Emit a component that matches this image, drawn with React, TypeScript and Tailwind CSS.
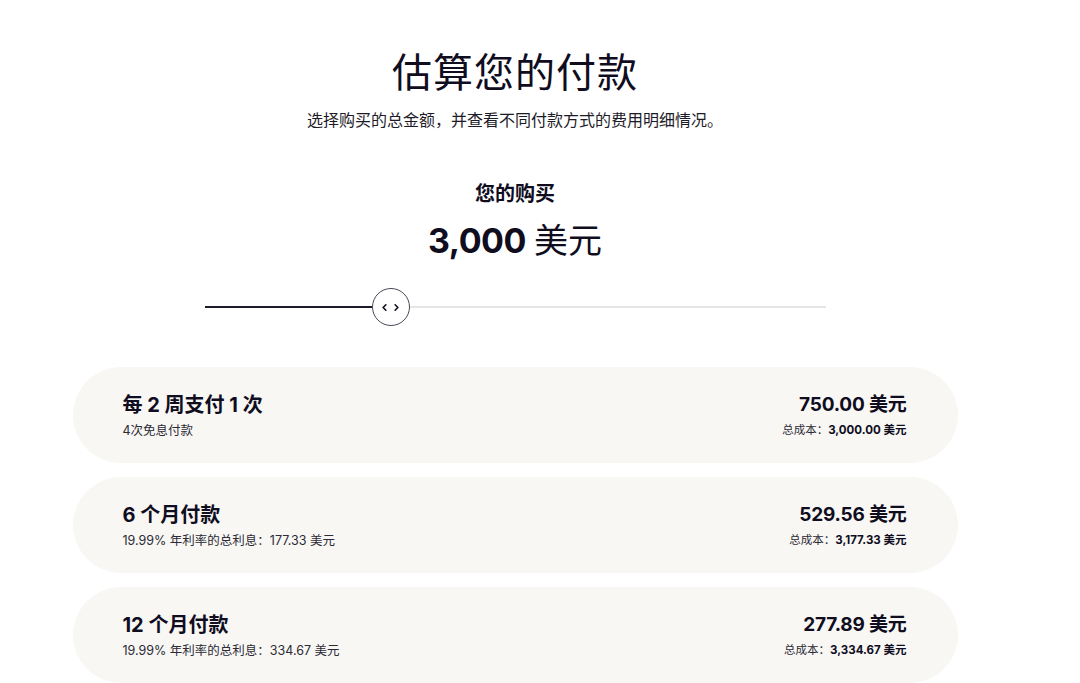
import { ChevronLeft, ChevronRight } from 'lucide-react';

interface PlanRow {
  title: string;
  detail: string;
  amount: string;
  total: string;
}

const plans: PlanRow[] = [
  { title: '每 2 周支付 1 次', detail: '4次免息付款', amount: '750.00 美元', total: '3,000.00 美元' },
  { title: '6 个月付款', detail: '19.99% 年利率的总利息：177.33 美元', amount: '529.56 美元', total: '3,177.33 美元' },
  { title: '12 个月付款', detail: '19.99% 年利率的总利息：334.67 美元', amount: '277.89 美元', total: '3,334.67 美元' },
];

const fontStack = "font-['Inter','Noto_Sans_CJK_SC',sans-serif]";

const PlanCard = ({ plan }: { plan: PlanRow }) => (
  <div className="flex h-[96px] items-center justify-between rounded-full bg-[#f8f7f4] pl-[50px] pr-[51px]">
    <div className="flex flex-col gap-[4px]">
      <div className="text-[20px] font-bold leading-[26px] text-[#0f0d1e]">{plan.title}</div>
      <div className="text-[12.5px] leading-[17px] text-[#2b2a35]">{plan.detail}</div>
    </div>
    <div className="flex flex-col items-end gap-[4px]">
      <div className="text-[19px] font-bold leading-[26px] tracking-[-0.2px] text-[#0f0d1e]">{plan.amount}</div>
      <div className="text-[11.5px] leading-[17px] text-[#2b2a35]">
        总成本：<span className="font-bold text-[#0f0d1e]">{plan.total}</span>
      </div>
    </div>
  </div>
);

export default function App() {
  return (
    <div className={`${fontStack} min-h-screen bg-white pr-[50px] text-[#0f0d1e]`}>
      <div className="mx-auto flex w-[885px] flex-col items-center">
        <h1 className="mt-[47px] text-[40px] font-normal leading-[52px] tracking-[1px]">估算您的付款</h1>
        <p className="mt-[10px] text-[16px] leading-[22px] text-[#1d1b28]">选择购买的总金额，并查看不同付款方式的费用明细情况。</p>

        <div className="mt-[50px] text-[20px] font-bold leading-[26px]">您的购买</div>
        <div className="mt-[12px] flex items-baseline gap-[8px] text-[34px] leading-[44px]">
          <span className="font-bold tracking-[-0.5px]">3,000</span>
          <span className="font-normal">美元</span>
        </div>

        <div className="mt-[25px] flex w-[621px] items-center">
          <div className="h-[2px] w-[167px] bg-[#1e1c2c]" />
          <div className="flex h-[38px] w-[38px] shrink-0 items-center justify-center gap-[1px] rounded-full border border-[#4a4858] bg-white">
            <ChevronLeft className="h-[11px] w-[11px]" strokeWidth={3.5} />
            <ChevronRight className="h-[11px] w-[11px]" strokeWidth={3.5} />
          </div>
          <div className="h-[2px] flex-1 bg-[#e5e5e5]" />
        </div>

        <div className="mt-[41px] flex w-full flex-col gap-[14px]">
          {plans.map((plan) => (
            <PlanCard key={plan.title} plan={plan} />
          ))}
        </div>
      </div>
    </div>
  );
}
